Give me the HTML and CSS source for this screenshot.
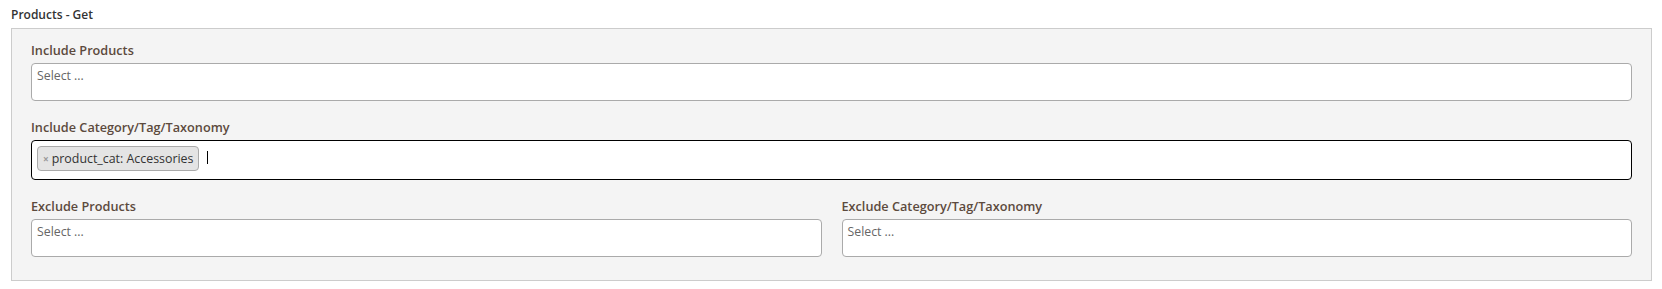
FILE: index.html
```html
<!DOCTYPE html>
<html lang="en">
<head>
  <meta charset="UTF-8">
  <meta name="viewport" content="width=device-width, initial-scale=1.0">
  <title>Products - Get</title>
  <link rel="stylesheet" href="styles.css">
</head>
<body>
  <div class="page">
    <div class="title">Products - Get</div>

    <div class="panel">
      <!-- Include -->
      <div class="field">
        <label>Include Products</label>
        <div class="select">Select ...</div>
      </div>

      <div class="field">
        <label>Include Category/Tag/Taxonomy</label>
        <div class="select focused">
          <span class="tag"><span class="tag-remove">&times;</span>product_cat: Accessories</span>
          <span class="caret"></span>
        </div>
      </div>

      <!-- Exclude -->
      <div class="row">
        <div class="field">
          <label>Exclude Products</label>
          <div class="select">Select ...</div>
        </div>
        <div class="field">
          <label>Exclude Category/Tag/Taxonomy</label>
          <div class="select">Select ...</div>
        </div>
      </div>
    </div>
  </div>
</body>
</html>
```

FILE: styles.css
```css
* {
  box-sizing: border-box;
  margin: 0;
  padding: 0;
}

body {
  font-family: "Open Sans", Arial, sans-serif;
  font-size: 12px;
  background-color: #fff;
  color: #333;
}

.page {
  padding: 6px 10px 0 11px;
}

.title {
  font-size: 12px;
  line-height: 17px;
  font-weight: 600;
  color: #333;
  margin-bottom: 5px;
}

.panel {
  background: #f4f4f4;
  border: 1px solid #ccc;
  padding: 12px 19px 23px 19px;
}

.field {
  margin-bottom: 17px;
}

.row .field,
.field:last-child {
  margin-bottom: 0;
}

label {
  display: block;
  font-size: 12.7px;
  line-height: 18px;
  font-weight: 600;
  color: #5c4a3d;
  margin-bottom: 4px;
}

.select {
  display: flex;
  align-items: flex-start;
  height: 38px;
  padding: 3px 5px;
  background: #fff;
  border: 1px solid #aaa;
  border-radius: 4px;
  color: #666;
  font-size: 12.3px;
  line-height: 18px;
}

.select.focused {
  height: 40px;
  border-color: #000;
  padding: 5px 5px;
}

.tag {
  display: inline-flex;
  align-items: center;
  height: 25px;
  padding: 0 5px;
  background: #e4e4e4;
  border: 1px solid #aaa;
  border-radius: 4px;
  color: #333;
  font-size: 12.4px;
}

.tag-remove {
  color: #999;
  font-size: 10px;
  font-weight: 700;
  margin-right: 3px;
}

.caret {
  display: inline-block;
  width: 1px;
  height: 13px;
  margin: 5px 0 0 8px;
  background: #000;
}

.row {
  display: grid;
  grid-template-columns: 1fr 1fr;
  gap: 20px;
}
```
